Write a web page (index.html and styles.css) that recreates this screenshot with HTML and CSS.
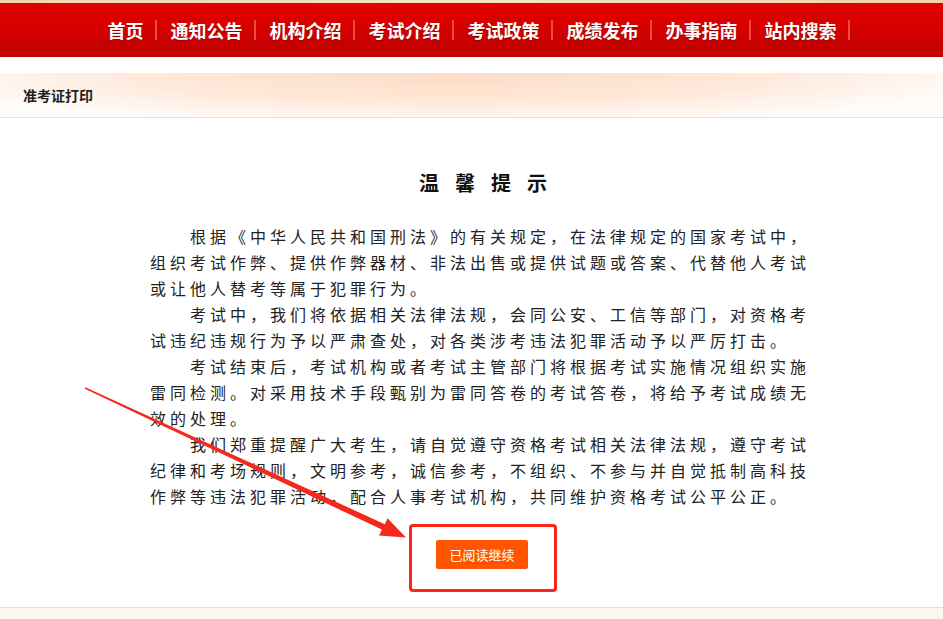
FILE: index.html
```html
<!DOCTYPE html>
<html>
<head>
    <meta charset="utf-8">
    <title>准考证打印</title>
    <link rel="stylesheet" href="styles.css">
</head>
<body>
<div class="topline"></div>
<div class="nav">
    <ul class="menu">
        <li><a href="#">首页</a></li>
        <li><a href="#">通知公告</a></li>
        <li><a href="#">机构介绍</a></li>
        <li><a href="#">考试介绍</a></li>
        <li><a href="#">考试政策</a></li>
        <li><a href="#">成绩发布</a></li>
        <li><a href="#">办事指南</a></li>
        <li><a href="#">站内搜索</a></li>
    </ul>
</div>
<div class="crumb">准考证打印</div>
<div class="main">
    <div class="content">
        <h2 class="title">温馨提示</h2>
        <div class="notice">
            <p>根据《中华人民共和国刑法》的有关规定，在法律规定的国家考试中，组织考试作弊、提供作弊器材、非法出售或提供试题或答案、代替他人考试或让他人替考等属于犯罪行为。</p>
            <p>考试中，我们将依据相关法律法规，会同公安、工信等部门，对资格考试违纪违规行为予以严肃查处，对各类涉考违法犯罪活动予以严厉打击。</p>
            <p>考试结束后，考试机构或者考试主管部门将根据考试实施情况组织实施雷同检测。对采用技术手段甄别为雷同答卷的考试答卷，将给予考试成绩无效的处理。</p>
            <p>我们郑重提醒广大考生，请自觉遵守资格考试相关法律法规，遵守考试纪律和考场规则，文明参考，诚信参考，不组织、不参与并自觉抵制高科技作弊等违法犯罪活动，配合人事考试机构，共同维护资格考试公平公正。</p>
        </div>
        <div class="action">
            <span class="mark"><a class="btn" href="#">已阅读继续</a></span>
        </div>
    </div>
</div>
<div class="footer"></div>

<!-- annotation arrow drawn over the page -->
<svg class="arrow" width="943" height="619" viewBox="0 0 943 619">
    <polygon points="85.3,387.2 384.8,524.2 387.5,518.2 406,537.5 379.1,535.6 381.8,529.6 84.7,388.8" fill="#f5281c"/>
</svg>
</body>
</html>
```

FILE: styles.css
```css
* {
    box-sizing: border-box;
}

body {
    margin: 0;
    padding: 0;
    position: relative;
    height: 619px;
    overflow: hidden;
    background: #fff;
    font-family: "Noto Sans CJK SC", "Noto Sans", sans-serif;
    color: #222;
}

.topline {
    height: 3px;
    background: linear-gradient(to right, #f0d6ae, #f6e2c4 50%, #efd3a8);
}

.nav {
    height: 54px;
    background: linear-gradient(to bottom, #e40000 0%, #d30000 55%, #c10000 88%, #d20a0a 89%, #b80000 100%);
}

.menu {
    list-style: none;
    margin: 0;
    padding: 0 0 0 14px;
    display: flex;
    justify-content: center;
    align-items: center;
    height: 100%;
}

.menu li {
    padding-left: 14px;
}

.menu li:first-child {
    padding-left: 0;
}

.menu a {
    display: block;
    padding-right: 11px;
    border-right: 2px solid #ee4a40;
    line-height: 20px;
    font-size: 18px;
    font-weight: bold;
    color: #fff;
    text-decoration: none;
    text-shadow: 0 1px 1px rgba(110, 0, 0, 0.6);
}

.crumb {
    margin-top: 16px;
    height: 45px;
    padding-left: 23px;
    line-height: 44px;
    font-size: 14px;
    font-weight: bold;
    color: #1e1e1e;
    border-bottom: 1px solid #fad8bb;
    background: radial-gradient(ellipse 60% 120% at 48% 0%, #fddcc3 0%, #fee9da 55%, #fff6f0 85%, #fffdfb 100%);
}

.main {
    height: 489px;
    padding-top: 50px;
}

.content {
    width: 662px;
    margin: 0 auto;
    padding-left: 19px;
    box-sizing: content-box;
}

.title {
    margin: 0;
    padding-left: 20px;
    text-align: center;
    font-size: 20px;
    line-height: 30px;
    letter-spacing: 16px;
    font-weight: bold;
    color: #111;
}

.notice {
    margin-top: 25px;
    font-size: 16px;
    line-height: 26px;
    letter-spacing: 4px;
    color: #222;
}

.notice p {
    margin: 0;
    text-indent: 40px;
}

.action {
    margin-top: 15px;
    padding-left: 4px;
    text-align: center;
}

.mark {
    display: inline-block;
    padding: 13px 26px 20px 24px;
    border: 3px solid #ff2418;
    border-radius: 4px;
}

.btn {
    display: block;
    width: 92px;
    height: 29px;
    line-height: 29px;
    border-radius: 2px;
    background: #ff5500;
    color: #fff;
    font-size: 13px;
    text-decoration: none;
}

.footer {
    height: 12px;
    border-top: 1px solid #f3dcc0;
    background: #fdf6ee;
}

.arrow {
    position: absolute;
    left: 0;
    top: 0;
    pointer-events: none;
}
```
